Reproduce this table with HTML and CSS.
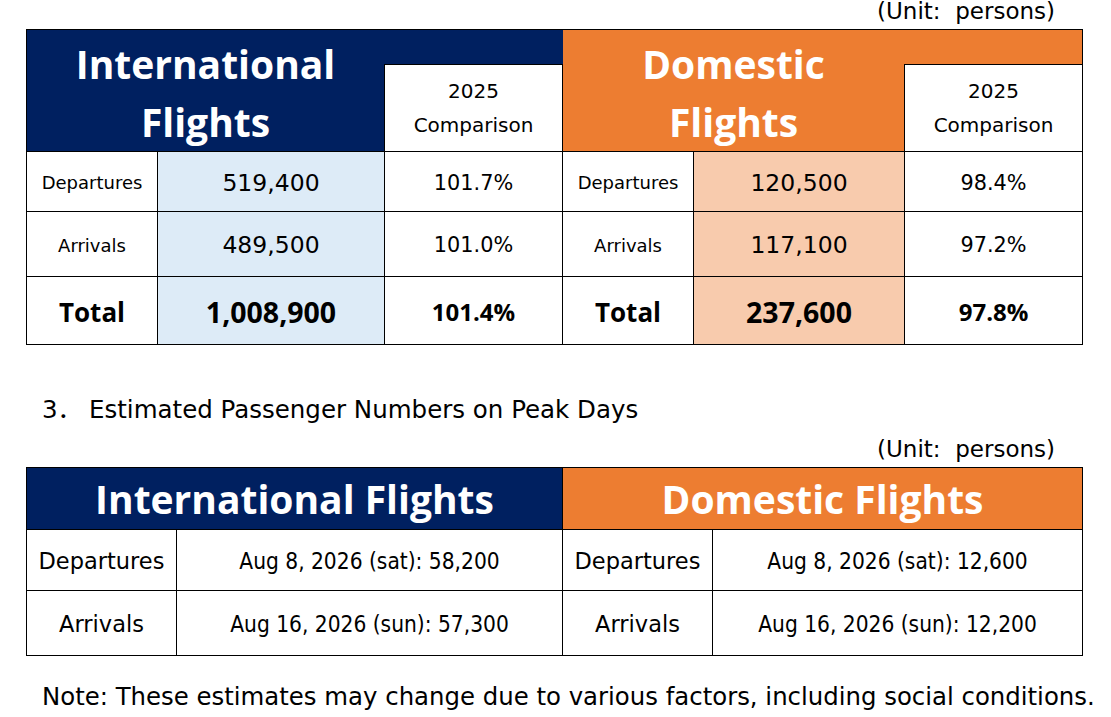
FILE: index.html
```html
<!DOCTYPE html>
<html lang="en">
<head>
<meta charset="utf-8">
<title>Passenger Estimates</title>
<link rel="stylesheet" href="styles.css">
</head>
<body>
<div class="sheet">
  <div class="unit unit-top">(Unit:&nbsp; persons)</div>
  <table class="t1">
    <colgroup>
      <col class="c-lab"><col class="c-num"><col class="c-cmp">
      <col class="c-lab"><col class="c-num2"><col class="c-cmp">
    </colgroup>
    <tr class="h-a">
      <th class="title intl" colspan="2" rowspan="2">International<br>Flights</th>
      <td class="fill intl"></td>
      <th class="title dom" colspan="2" rowspan="2">Domestic<br>Flights</th>
      <td class="fill dom"></td>
    </tr>
    <tr class="h-b">
      <td class="cmp-head">2025<br>Comparison</td>
      <td class="cmp-head">2025<br>Comparison</td>
    </tr>
    <tr class="r1">
      <td class="lab">Departures</td>
      <td class="num blue">519,400</td>
      <td class="pct">101.7%</td>
      <td class="lab">Departures</td>
      <td class="num peach">120,500</td>
      <td class="pct">98.4%</td>
    </tr>
    <tr class="r2">
      <td class="lab">Arrivals</td>
      <td class="num blue">489,500</td>
      <td class="pct">101.0%</td>
      <td class="lab">Arrivals</td>
      <td class="num peach">117,100</td>
      <td class="pct">97.2%</td>
    </tr>
    <tr class="r3">
      <td class="lab total">Total</td>
      <td class="num blue bold">1,008,900</td>
      <td class="pct bold-sm">101.4%</td>
      <td class="lab total">Total</td>
      <td class="num peach bold">237,600</td>
      <td class="pct bold-sm">97.8%</td>
    </tr>
  </table>

  <h2 class="section"><span class="sec-no">3．</span>Estimated Passenger Numbers on Peak Days</h2>
  <div class="unit unit-mid">(Unit:&nbsp; persons)</div>

  <table class="t2">
    <colgroup>
      <col class="d-lab"><col class="d-val"><col class="d-lab"><col class="d-val2">
    </colgroup>
    <tr class="h2row">
      <th class="title2 intl" colspan="2">International Flights</th>
      <th class="title2 dom" colspan="2">Domestic Flights</th>
    </tr>
    <tr class="q1">
      <td class="lab2">Departures</td>
      <td class="date">Aug 8, 2026 (sat): 58,200</td>
      <td class="lab2">Departures</td>
      <td class="date">Aug 8, 2026 (sat): 12,600</td>
    </tr>
    <tr class="q2">
      <td class="lab2">Arrivals</td>
      <td class="date">Aug 16, 2026 (sun): 57,300</td>
      <td class="lab2">Arrivals</td>
      <td class="date">Aug 16, 2026 (sun): 12,200</td>
    </tr>
  </table>

  <p class="note">Note: These estimates may change due to various factors, including social conditions.</p>
</div>
</body>
</html>
```
FILE: styles.css
```css
html, body {
  margin: 0;
  padding: 0;
  background: #ffffff;
}
body {
  font-family: "DejaVu Sans", Verdana, "Noto Sans CJK JP", sans-serif;
  color: #000000;
}
.sheet {
  width: 1057px;
  margin-left: 26px;
}
.unit {
  text-align: right;
  padding-right: 28px;
  font-size: 23px;
}
.unit-top {
  line-height: 22px;
  height: 29px;
}
.unit-mid {
  line-height: 26px;
  margin-top: 11px;
  margin-bottom: 5px;
}
table {
  border-collapse: collapse;
  table-layout: fixed;
  width: 1057px;
}
td, th {
  border: 1px solid #000;
  padding: 0;
  text-align: center;
  vertical-align: middle;
}
.c-lab { width: 131px; }
.c-num { width: 227px; }
.c-num2 { width: 211px; }
.c-cmp { width: 178px; }

.h-a { height: 35px; }
.h-b { height: 87px; }
.r1 { height: 60px; }
.r2 { height: 65px; }
.r3 { height: 68px; }

.intl { background: #002060; }
.dom { background: #ed7d31; }
.t1 .fill.intl {
  border-left: hidden;
  border-right: hidden;
}
.t1 .fill.dom {
  border-left: hidden;
}

.title {
  font-family: "Open Sans", "Noto Sans", sans-serif;
  font-weight: 700;
  font-size: 39px;
  line-height: 58px;
  color: #ffffff;
  padding-top: 5px;
}
.cmp-head {
  font-size: 20px;
  line-height: 34px;
  background: #ffffff;
}
.lab {
  font-size: 18px;
  padding-top: 2px;
}
.num {
  font-size: 23.5px;
  padding-top: 2px;
}
.pct {
  font-size: 20.8px;
  padding-top: 2px;
}
.blue { background: #ddebf7; }
.peach { background: #f8cbad; }
.total {
  font-family: "Open Sans", "Noto Sans", sans-serif;
  font-weight: 700;
  font-size: 26px;
}
.bold {
  font-family: "Open Sans", "Noto Sans", sans-serif;
  font-weight: 700;
  font-size: 28.5px;
}
.bold-sm {
  font-family: "Open Sans", "Noto Sans", sans-serif;
  font-weight: 700;
  font-size: 24px;
}

.section {
  margin: 50px 0 0 0;
  padding-left: 16px;
  font-weight: 400;
  font-size: 24.5px;
  line-height: 30px;
}
.sec-no {
  display: inline-block;
  width: 47px;
}

.d-lab { width: 150px; }
.d-val { width: 386px; }
.d-val2 { width: 370px; }
.h2row { height: 62px; }
.q1 { height: 61px; }
.q2 { height: 65px; }
.title2 {
  font-family: "Open Sans", "Noto Sans", sans-serif;
  font-weight: 700;
  font-size: 39px;
  color: #ffffff;
  line-height: 50px;
}
.lab2 {
  font-size: 22.5px;
  padding-top: 2px;
}
.date {
  font-family: "DejaVu Sans Condensed", "DejaVu Sans", sans-serif;
  font-stretch: condensed;
  font-size: 22.5px;
  padding-top: 2px;
}
.note {
  margin: 26px 0 0 0;
  padding-left: 16px;
  font-size: 24.4px;
  line-height: 30px;
  white-space: nowrap;
}
```
